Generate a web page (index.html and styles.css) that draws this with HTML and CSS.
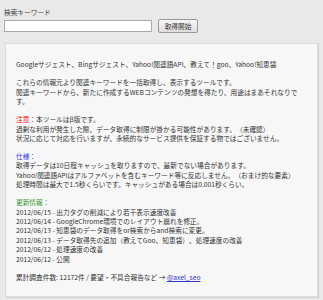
FILE: index.html
```html
<!DOCTYPE html>
<html lang="ja">
<head>
    <meta charset="UTF-8">
    <meta name="viewport" content="width=device-width, initial-scale=1.0">
    <title>関連キーワード取得ツール</title>
    <link rel="stylesheet" href="styles.css">
</head>
<body>

<!-- 検索フォーム -->
<form class="search-form" onsubmit="return false;">
    <label class="search-label" for="keyword">検索キーワード</label>
    <div class="search-row">
        <input type="text" id="keyword" class="search-input">
        <button type="submit" class="search-button">取得開始</button>
    </div>
</form>

<!-- 説明 -->
<div class="panel">
    <p>Googleサジェスト、Bingサジェスト、Yahoo!関連語API、教えて！goo、Yahoo!知恵袋</p>

    <p>これらの情報元より関連キーワードを一括取得し、表示するツールです。<br>
    関連キーワードから、新たに作成するWEBコンテンツの発想を得たり、用途はまあそれなりで<br>す。</p>

    <p><span class="note">注意：</span>本ツールはβ版です。<br>
    過剰な利用が発生した際、データ取得に制限が掛かる可能性があります。（未確認）<br>
    状況に応じて対応を行いますが、永続的なサービス提供を保証する物ではございません。</p>

    <p><span class="spec">仕様：</span><br>
    取得データは10日程キャッシュを取りますので、最新でない場合があります。<br>
    Yahoo!関連語APIはアルファベットを含むキーワード等に反応しません。（おまけ的な要素）<br>
    処理時間は最大で1.5秒くらいです。キャッシュがある場合は0.001秒くらい。</p>

    <p><span class="update">更新情報：</span><br>
    2012/06/15 - 出力タグの削減により若干表示速度改善<br>
    2012/06/14 - GoogleChrome環境でのレイアウト崩れを修正。<br>
    2012/06/13 - 知恵袋のデータ取得をor検索からand検索に変更。<br>
    2012/06/13 - データ取得先の追加（教えてGoo、知恵袋）、処理速度の改善<br>
    2012/06/12 - 処理速度の改善<br>
    2012/06/12 - 公開</p>

    <p>累計調査件数: 12172件 / 要望・不具合報告など → <a href="#">@axel_seo</a></p>
</div>

</body>
</html>
```

FILE: styles.css
```css
* {
    margin: 0;
    padding: 0;
    box-sizing: border-box;
}
body {
    font-family: 'Noto Sans CJK JP', sans-serif;
    font-size: 6.7px;
    line-height: 9.4px;
    background: #e9e9e9;
    color: #333;
    text-spacing-trim: space-all;
}
.search-form {
    padding: 8px 4px 0;
}
.search-label {
    display: block;
    color: #444;
    margin-bottom: 2px;
}
.search-row {
    display: flex;
    align-items: flex-start;
    gap: 6px;
}
.search-input {
    width: 148px;
    height: 12px;
    margin-top: 1px;
    border: 1px solid #aaa;
    background: #fff;
}
.search-button {
    font-family: inherit;
    font-size: 6.7px;
    width: 40px;
    height: 14px;
    border: 1px solid #999;
    border-radius: 2px;
    background: linear-gradient(#f6f6f6, #dedede);
    color: #333;
}
.panel {
    margin: 10px 5px 4px;
    padding: 16px 19px 14px 10px;
    background: #f7f7f7;
    border: 1px solid #dcdcdc;
    box-shadow: 1px 1px 1px rgba(0, 0, 0, 0.08);
}
.panel p {
    margin-bottom: 8.6px;
}
.panel p:last-child {
    margin-bottom: 0;
}
.note {
    color: #f00;
}
.spec {
    color: #33f;
}
.update {
    color: #393;
}
.panel a {
    color: #33c;
}
```
